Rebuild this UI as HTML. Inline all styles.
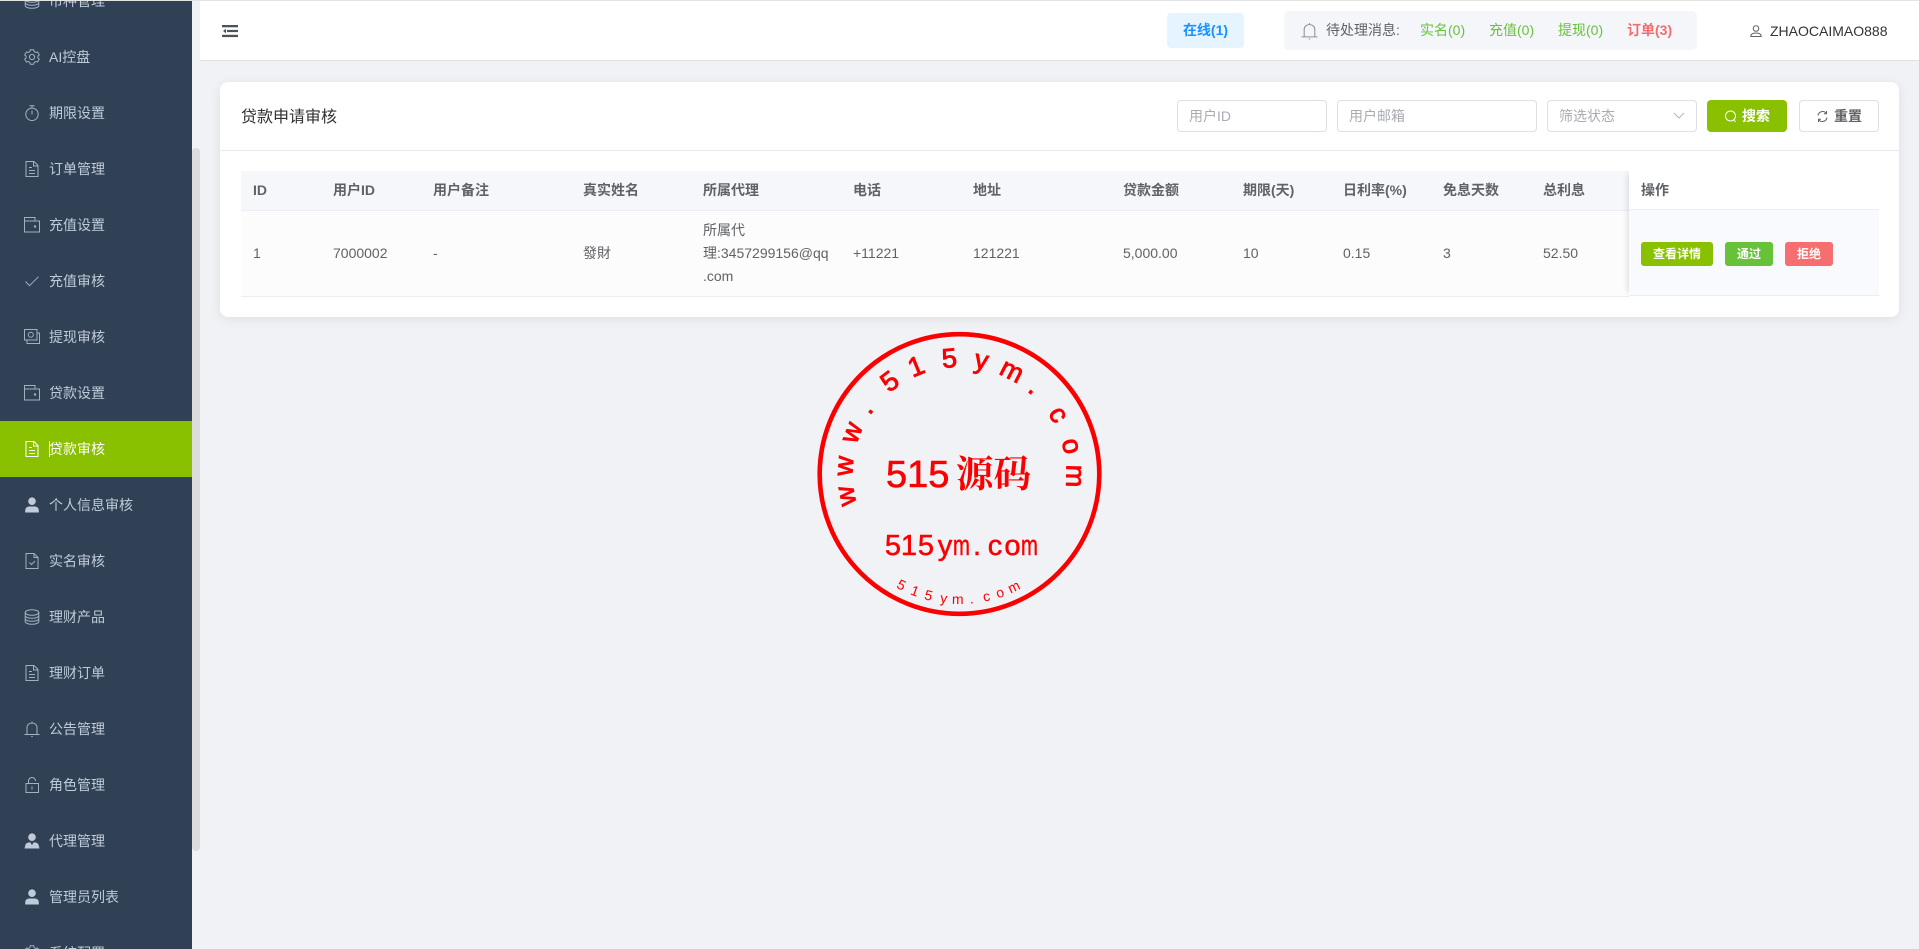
<!DOCTYPE html>
<html lang="zh-CN"><head><meta charset="utf-8"><title>贷款申请审核</title>
<style>
*{box-sizing:border-box}
html,body{margin:0;padding:0;width:1919px;height:949px;overflow:hidden;background:#f0f2f6;font-family:"Liberation Sans","Noto Sans CJK SC",sans-serif;font-size:14px;color:#606266}
.abs,.side,.top,.card{position:absolute}
.topline{position:absolute;left:0;top:0;width:1919px;height:1px;background:#e4e4e4;z-index:5}
.side{left:0;top:0;width:192px;height:949px;background:#304156;overflow:hidden}
.it{position:absolute;left:0;width:192px;height:56px;line-height:56px;color:#bfcbd9;padding-left:49px;white-space:nowrap}
.it svg{position:absolute;left:24px;top:20px;width:16px;height:16px;fill:none;stroke:#a3b0c0;stroke-width:1}
.it.on{background:#89c000;color:#fff}
.it.on svg{stroke:#fff}
.caret{position:absolute;left:49px;top:20px;width:1px;height:16px;background:#fff}
.sb{position:absolute;left:192px;top:148px;width:8px;height:703px;background:#dcdcdc;border-radius:4px}
.top{left:200px;top:1px;width:1719px;height:60px;background:#fff;border-bottom:1px solid #e2e2e4}
.online{position:absolute;left:967px;top:12px;width:77px;height:35px;line-height:35px;text-align:center;background:#e6f4ff;color:#1890ff;font-weight:bold;border-radius:4px;font-size:14px}
.pend{position:absolute;left:1084px;top:10px;width:413px;height:39px;background:#f4f6fa;border-radius:5px}
.pend span{position:absolute;top:0;line-height:39px;white-space:nowrap}
.user{position:absolute;left:1570px;top:0;line-height:60px;color:#333;font-size:14px}
.card{left:220px;top:82px;width:1679px;height:235px;background:#fff;border-radius:8px;box-shadow:0 2px 12px rgba(0,0,0,.08)}
.hd{position:absolute;left:0;top:68px;width:100%;height:1px;background:#e8eaf2}
.title{position:absolute;left:21px;top:0;line-height:72px;font-size:16px;color:#303133}
.inp{position:absolute;top:18px;height:32px;border:1px solid #dcdfe6;border-radius:4px;line-height:30px;padding-left:11px;color:#a8abb2;background:#fff;font-size:14px}
.btn{position:absolute;top:18px;width:80px;height:32px;border-radius:4px;line-height:30px;text-align:center;font-weight:bold;font-size:14px}
table{position:absolute;left:21px;top:89px;width:1388px;border-collapse:collapse;table-layout:fixed}
th,td{padding:0 0 0 12px;text-align:left;font-size:14px;vertical-align:middle}
th{height:39px;background:#f5f7fb;font-weight:bold;color:#5f6368;border-bottom:1px solid #ebeef5}
td{height:86px;background:#fcfcfd;line-height:23px;border-bottom:1px solid #ebeef5;color:#606266}
.fix{position:absolute;left:1409px;top:89px;width:250px;height:125px;box-shadow:-4px 0 6px -3px rgba(0,0,0,.14);clip-path:inset(0 0 0 -10px)}
.fix .h{height:39px;line-height:38px;background:#fff;padding-left:12px;font-weight:bold;color:#5f6368;border-bottom:1px solid #ebeef5}
.fix .r{height:86px;background:#f9fafd;border-bottom:1px solid #ebeef5;position:relative}
.b{position:absolute;top:32px;height:24px;line-height:24px;text-align:center;color:#fff;font-size:12px;font-weight:bold;border-radius:3px}
</style></head>
<body>
<svg width="0" height="0" style="position:absolute"><defs>
<symbol id="doc" viewBox="0 0 16 16"><path d="M2 .5h8l4 4v11H2zM9.500.5v4.500H14M5 6.500h3M5 9.500h6M5 12.500h6"/></symbol>
<symbol id="fold" viewBox="0 0 16 16"><path d="M.5 .5h10.500v3.500h4.500v11H.5zM.5 4h10.500"/><circle cx="11" cy="9.500" r=".7" fill="currentColor"/></symbol>
<symbol id="gear" viewBox="0 0 16 16"><path d="M6.300.8h3.400l.5 1.800 1.500.9 1.900-.5 1.700 2.900-1.400 1.300v1.600l1.400 1.300-1.700 2.900-1.900-.5-1.500.9-.5 1.800H6.300l-.5-1.800-1.500-.9-1.900.5L.7 10.100l1.400-1.300V7.200L.7 5.900l1.700-2.900 1.900.5 1.500-.9z"/><circle cx="8" cy="8" r="2.600"/></symbol>
<symbol id="timer" viewBox="0 0 16 16"><circle cx="8" cy="9.300" r="6.200"/><path d="M5.500.8h5M8 .8v2.300M8 5.500v4"/></symbol>
<symbol id="check" viewBox="0 0 16 16"><path d="M1.500 8.500l4 4.200 9-9"/></symbol>
<symbol id="money" viewBox="0 0 16 16"><path d="M.5 .5h12.500v10.500H.5zM3 11v3.500h12.500V4H13"/><circle cx="6.800" cy="5.700" r="2.500"/></symbol>
<symbol id="person" viewBox="0 0 16 16"><circle cx="8" cy="4.200" r="3.800" fill="#bfcbd9" stroke="none"/><path d="M1.200 15.500v-2.300c0-2 1.800-3.700 3.800-3.700h6c2 0 3.800 1.700 3.800 3.700v2.300z" fill="#bfcbd9" stroke="none"/></symbol>
<symbol id="agent" viewBox="0 0 16 16"><circle cx="8" cy="4.200" r="3.800" fill="#bfcbd9" stroke="none"/><path d="M.5 15.500l1-4c.4-1.300 2.500-2 4.700-2.300L8 12l1.800-2.800c2.200.3 4.300 1 4.700 2.300l1 4z" fill="#bfcbd9" stroke="none"/></symbol>
<symbol id="doccheck" viewBox="0 0 16 16"><path d="M2 .5h8l4 4v11H2zM10 .5v4h4M5.500 9.500l2 2 3.500-3.500"/></symbol>
<symbol id="coins" viewBox="0 0 16 16"><ellipse cx="8" cy="3.500" rx="6.800" ry="2.800"/><path d="M1.200 3.500v9c0 1.600 3 2.800 6.800 2.800s6.800-1.200 6.800-2.800v-9M1.200 6.500c0 1.600 3 2.800 6.800 2.800s6.800-1.200 6.800-2.800M1.200 9.500c0 1.600 3 2.800 6.800 2.800s6.800-1.200 6.800-2.800"/></symbol>
<symbol id="bell" viewBox="0 0 16 16"><path d="M.5 13.500h15M3 13.500V6.500C3 3.800 5.200 2 8 2s5 1.800 5 4.500v7M8 .5V2M7.300 15.500h1.400"/></symbol>
<symbol id="lock" viewBox="0 0 16 16"><path d="M2 6.500h12.500v9H2zM4.500 6.500V4C4.500 2 6 .5 8 .5S11.500 2 11.500 4M8 9.500v3"/></symbol>
</defs></svg>

<div class="side">
<div class="it" style="top:-27px"><svg><use href="#coins"/></svg>币种管理</div>
<div class="it" style="top:29px"><svg><use href="#gear"/></svg>AI控盘</div>
<div class="it" style="top:85px"><svg><use href="#timer"/></svg>期限设置</div>
<div class="it" style="top:141px"><svg><use href="#doc"/></svg>订单管理</div>
<div class="it" style="top:197px"><svg><use href="#fold"/></svg>充值设置</div>
<div class="it" style="top:253px"><svg><use href="#check"/></svg>充值审核</div>
<div class="it" style="top:309px"><svg><use href="#money"/></svg>提现审核</div>
<div class="it" style="top:365px"><svg><use href="#fold"/></svg>贷款设置</div>
<div class="it on" style="top:421px"><svg><use href="#doc"/></svg><i class="caret"></i>贷款审核</div>
<div class="it" style="top:477px"><svg><use href="#person"/></svg>个人信息审核</div>
<div class="it" style="top:533px"><svg><use href="#doccheck"/></svg>实名审核</div>
<div class="it" style="top:589px"><svg><use href="#coins"/></svg>理财产品</div>
<div class="it" style="top:645px"><svg><use href="#doc"/></svg>理财订单</div>
<div class="it" style="top:701px"><svg><use href="#bell"/></svg>公告管理</div>
<div class="it" style="top:757px"><svg><use href="#lock"/></svg>角色管理</div>
<div class="it" style="top:813px"><svg><use href="#agent"/></svg>代理管理</div>
<div class="it" style="top:869px"><svg><use href="#person"/></svg>管理员列表</div>
<div class="it" style="top:925px"><svg><use href="#gear"/></svg>系统配置</div>
</div>
<div class="sb"></div>
<div class="topline"></div>

<div class="top">
<svg class="abs" style="left:22px;top:23px" width="16" height="14" viewBox="0 0 16 14" fill="#4d5159"><rect x="0" y="1" width="16" height="2.300"/><rect x="5" y="5.900" width="11" height="2.200"/><rect x="0" y="10.800" width="16" height="2.300"/><path d="M1 7l3-2.200v4.400z"/></svg>
<div class="online">在线(1)</div>
<div class="pend">
<svg class="abs" style="left:17px;top:11px" width="17" height="18" viewBox="0 0 16 16" fill="none" stroke="#909399"><use href="#bell"/></svg>
<span style="left:42px;color:#606266">待处理消息:</span>
<span style="left:136px;color:#67c23a">实名(0)</span>
<span style="left:205px;color:#67c23a">充值(0)</span>
<span style="left:274px;color:#67c23a">提现(0)</span>
<span style="left:343px;color:#f56c6c;font-weight:bold">订单(3)</span>
</div>
<svg class="abs" style="left:1550px;top:24px" width="12" height="12" viewBox="0 0 12 12" fill="none" stroke="#606266"><circle cx="6" cy="3.500" r="2.800"/><path d="M.8 11.500c0-2.500 2-3.500 5.200-3.500s5.200 1 5.200 3.500z"/></svg>
<div class="user">ZHAOCAIMAO888</div>
</div>

<div class="card">
<div class="title">贷款申请审核</div>
<div class="inp" style="left:957px;width:150px">用户ID</div>
<div class="inp" style="left:1117px;width:200px">用户邮箱</div>
<div class="inp" style="left:1327px;width:150px">筛选状态<svg class="abs" style="left:125px;top:11px" width="12" height="8" viewBox="0 0 12 8" fill="none" stroke="#b4b7bd"><path d="M1 1l5 5 5-5"/></svg></div>
<div class="btn" style="left:1487px;background:#89c000;color:#fff;line-height:32px"><svg style="vertical-align:-2px;margin-right:5px" width="13" height="13" viewBox="0 0 13 13" fill="none" stroke="#fff"><circle cx="6.500" cy="6" r="5"/><path d="M10 10l1.500 2"/></svg>搜索</div>
<div class="btn" style="left:1579px;background:#fff;border:1px solid #dcdfe6;color:#606266"><svg style="vertical-align:-2px;margin-right:5px" width="13" height="13" viewBox="0 0 13 13" fill="none" stroke="#606266"><path d="M2 5.500A4.700 4.700 0 0 1 10.500 3.500M11 7.500A4.700 4.700 0 0 1 2.500 9.500M10.500 1v2.800H8M2.500 12V9.200H5"/></svg>重置</div>
<div class="hd"></div>
<table>
<colgroup><col style="width:80px"><col style="width:100px"><col style="width:150px"><col style="width:120px"><col style="width:150px"><col style="width:120px"><col style="width:150px"><col style="width:120px"><col style="width:100px"><col style="width:100px"><col style="width:100px"><col style="width:98px"></colgroup>
<tr><th>ID</th><th>用户ID</th><th>用户备注</th><th>真实姓名</th><th>所属代理</th><th>电话</th><th>地址</th><th>贷款金额</th><th>期限(天)</th><th>日利率(%)</th><th>免息天数</th><th>总利息</th></tr>
<tr><td>1</td><td>7000002</td><td>-</td><td>發財</td><td style="white-space:nowrap">所属代<br>理:3457299156@qq<br>.com</td><td>+11221</td><td>121221</td><td>5,000.00</td><td>10</td><td>0.15</td><td>3</td><td>52.50</td></tr>
</table>
<div class="fix">
<div class="h">操作</div>
<div class="r">
<div class="b" style="left:12px;width:72px;background:#89c000">查看详情</div>
<div class="b" style="left:96px;width:48px;background:#67c23a">通过</div>
<div class="b" style="left:156px;width:48px;background:#f76e70">拒绝</div>
</div>
</div>
</div>

<svg class="abs" style="left:0;top:0;pointer-events:none" width="1919" height="949" viewBox="0 0 1919 949" fill="#fb0000" font-family="'Liberation Sans','Noto Sans CJK SC',sans-serif">
<circle cx="959.500" cy="474" r="139.800" fill="none" stroke="#fb0000" stroke-width="4.600"/>
<g font-size="27" text-anchor="middle" stroke="#fb0000" stroke-width=".9">
<text x="959.500" y="367" transform="rotate(-101 959.500 474)">w</text>
<text x="959.500" y="367" transform="rotate(-86 959.500 474)">w</text>
<text x="959.500" y="367" transform="rotate(-69 959.500 474)">w</text>
<text x="959.500" y="367" transform="rotate(-55 959.500 474)">.</text>
<text x="959.500" y="367" transform="rotate(-37 959.500 474)">5</text>
<text x="959.500" y="367" transform="rotate(-22 959.500 474)">1</text>
<text x="959.500" y="367" transform="rotate(-5 959.500 474)">5</text>
<text x="959.500" y="367" transform="rotate(11 959.500 474)">y</text>
<text x="959.500" y="367" transform="rotate(27 959.500 474)">m</text>
<text x="959.500" y="367" transform="rotate(41 959.500 474)">.</text>
<text x="959.500" y="367" transform="rotate(59 959.500 474)">c</text>
<text x="959.500" y="367" transform="rotate(76 959.500 474)">o</text>
<text x="959.500" y="367" transform="rotate(91 959.500 474)">m</text>
</g>
<text x="886" y="487" font-size="38" stroke="#fb0000" stroke-width=".6">515</text>
<text x="956" y="487" font-size="37.500" font-weight="bold" font-family="'Noto Serif CJK SC',serif">源码</text>
<g font-size="29" text-anchor="middle" stroke="#fb0000" stroke-width=".5">
<text x="893" y="555">5</text>
<text x="909" y="555">1</text>
<text x="926" y="555">5</text>
<text x="945" y="555">y</text>
<text transform="translate(961.500 555) scale(.7 1)">m</text>
<text x="977" y="555">.</text>
<text x="995" y="555">c</text>
<text x="1012.500" y="555">o</text>
<text transform="translate(1029.500 555) scale(.7 1)">m</text>
</g>
<g font-size="14" text-anchor="middle">
<text x="959.500" y="604" transform="rotate(27.600 959.500 474)">5</text>
<text x="959.500" y="604" transform="rotate(20.800 959.500 474)">1</text>
<text x="959.500" y="604" transform="rotate(14.300 959.500 474)">5</text>
<text x="959.500" y="604" transform="rotate(7.200 959.500 474)">y</text>
<text x="959.500" y="604" transform="rotate(.8 959.500 474)">m</text>
<text x="959.500" y="604" transform="rotate(-5.500 959.500 474)">.</text>
<text x="959.500" y="604" transform="rotate(-12.400 959.500 474)">c</text>
<text x="959.500" y="604" transform="rotate(-18.800 959.500 474)">o</text>
<text x="959.500" y="604" transform="rotate(-25.700 959.500 474)">m</text>
</g>
</svg>
</body></html>
